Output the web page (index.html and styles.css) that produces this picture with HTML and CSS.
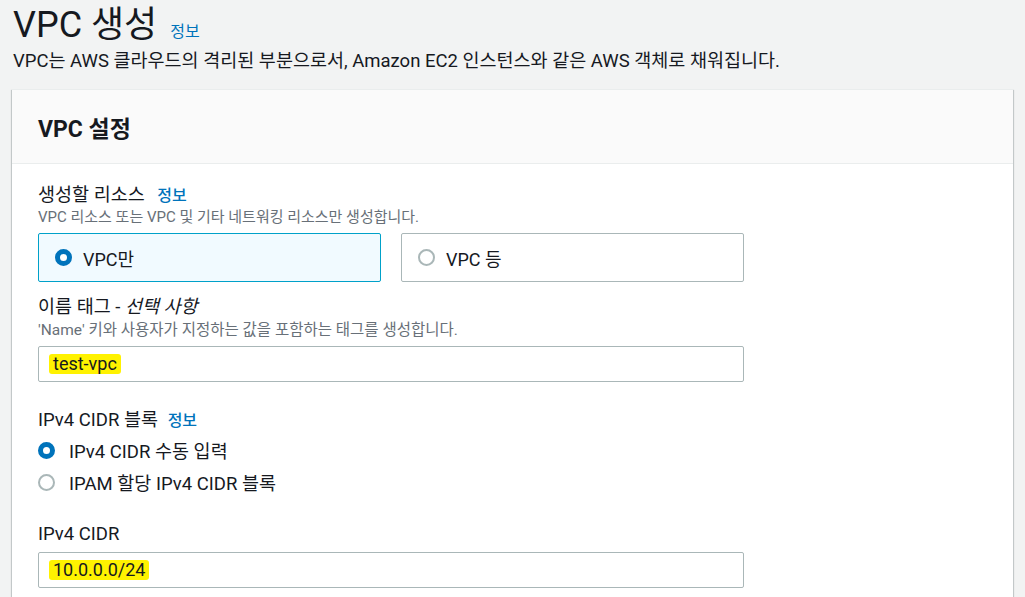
FILE: index.html
```html
<!DOCTYPE html>
<html lang="ko">
<head>
    <meta charset="UTF-8">
    <meta name="viewport" content="width=device-width, initial-scale=1.0">
    <title>VPC 생성</title>
    <link rel="stylesheet" href="styles.css">
</head>
<body>
    <div class="pagina">
        <div class="cabecalho">
            <h1>VPC 생성 <a href="#" class="info info-titulo">정보</a></h1>
            <p class="descricao">VPC는 AWS 클라우드의 격리된 부분으로서, Amazon EC2 인스턴스와 같은 AWS 객체로 채워집니다.</p>
        </div>

        <div class="card">
            <div class="card-topo">
                <h2>VPC 설정</h2>
            </div>
            <div class="card-corpo">
                <div class="campo">
                    <div class="rotulo">생성할 리소스 <a href="#" class="info info-recurso">정보</a></div>
                    <div class="ajuda">VPC 리소스 또는 VPC 및 기타 네트워킹 리소스만 생성합니다.</div>
                    <div class="blocos">
                        <div class="bloco selecionado">
                            <span class="radio marcado"></span>
                            <span>VPC만</span>
                        </div>
                        <div class="bloco">
                            <span class="radio"></span>
                            <span>VPC 등</span>
                        </div>
                    </div>
                </div>

                <div class="campo campo-tag">
                    <div class="rotulo">이름 태그 - <em>선택 사항</em></div>
                    <div class="ajuda ajuda-tag">'Name' 키와 사용자가 지정하는 값을 포함하는 태그를 생성합니다.</div>
                    <div class="entrada entrada-tag"><span class="marca">test-vpc</span></div>
                </div>

                <div class="campo campo-bloco">
                    <div class="rotulo">IPv4 CIDR 블록 <a href="#" class="info">정보</a></div>
                    <div class="opcoes">
                        <div class="opcao"><span class="radio marcado"></span><span>IPv4 CIDR 수동 입력</span></div>
                        <div class="opcao"><span class="radio"></span><span>IPAM 할당 IPv4 CIDR 블록</span></div>
                    </div>
                </div>

                <div class="campo campo-cidr">
                    <div class="rotulo">IPv4 CIDR</div>
                    <div class="entrada entrada-cidr"><span class="marca">10.0.0.0/24</span></div>
                </div>
            </div>
        </div>
    </div>
</body>
</html>
```

FILE: styles.css
```css
body {
    font-family: Roboto, "Noto Sans CJK KR", sans-serif;
    background-color: #f2f3f3;
    color: #16191f;
    margin: 0;
    padding: 0;
}

.pagina {
    padding: 0 12px;
}

.cabecalho {
    padding-left: 1px;
}

h1 {
    font-size: 36px;
    font-weight: 400;
    margin: 0;
    line-height: 51px;
}

.info {
    color: #0073bb;
    text-decoration: none;
    font-size: 16px;
    font-weight: 400;
    line-height: 1;
}

.info-titulo {
    margin-left: 4px;
}

.descricao {
    font-size: 18.5px;
    margin: 0;
    line-height: 20px;
    padding-bottom: 18px;
}

.card {
    width: 1001px;
    background-color: #fff;
    border-top: 1px solid #eaeded;
    box-shadow: 0 1px 1px 0 rgba(0, 28, 36, 0.3), 1px 1px 1px 0 rgba(0, 28, 36, 0.15), -1px 1px 1px 0 rgba(0, 28, 36, 0.15);
}

.card-topo {
    background-color: #fafafa;
    border-bottom: 1px solid #eaeded;
    padding: 0 26px;
    height: 73px;
    display: flex;
    align-items: center;
}

h2 {
    font-size: 23px;
    font-weight: 700;
    margin: 0;
}

.card-corpo {
    padding: 19px 26px 18px;
    width: 706px;
}

.rotulo {
    font-size: 18.5px;
    line-height: 24px;
}

.rotulo .info {
    margin-left: 5px;
    font-weight: 500;
}

.rotulo .info-recurso {
    margin-left: 8px;
}

.rotulo em {
    font-style: italic;
}

.ajuda {
    font-size: 15px;
    color: #687078;
    line-height: 20px;
}

.ajuda-tag {
    margin-top: 1px;
    font-size: 15.5px;
}

.blocos {
    display: flex;
    gap: 20px;
    margin-top: 6px;
}

.bloco {
    flex: 1;
    height: 47px;
    border: 1px solid #aab7b8;
    border-radius: 2px;
    display: flex;
    align-items: center;
    padding: 0 16px;
    gap: 11px;
    font-size: 18px;
}

.bloco.selecionado {
    border-color: #00a1c9;
    background-color: #f1faff;
}

.radio {
    display: inline-block;
    box-sizing: border-box;
    width: 17px;
    height: 17px;
    border: 2px solid #aab7b8;
    border-radius: 50%;
    background-color: #fff;
    flex-shrink: 0;
}

.radio.marcado {
    border: 5px solid #0073bb;
}

.campo-tag {
    margin-top: 13px;
}

.entrada {
    box-sizing: border-box;
    height: 36px;
    border: 1px solid #aab7b8;
    border-radius: 2px;
    background-color: #fff;
    display: flex;
    align-items: center;
    padding: 0 10px;
    font-size: 18px;
}

.entrada-tag {
    margin-top: 6px;
}

.marca {
    background-color: #fff200;
    padding: 0 4px;
    border-radius: 3px;
    line-height: 20px;
}

.campo-bloco {
    margin-top: 26px;
}

.opcoes {
    margin-top: 2px;
}

.opcao {
    display: flex;
    align-items: center;
    gap: 14px;
    font-size: 18.5px;
    height: 32px;
}

.campo-cidr {
    margin-top: 24px;
}

.entrada-cidr {
    margin-top: 6px;
}
```
